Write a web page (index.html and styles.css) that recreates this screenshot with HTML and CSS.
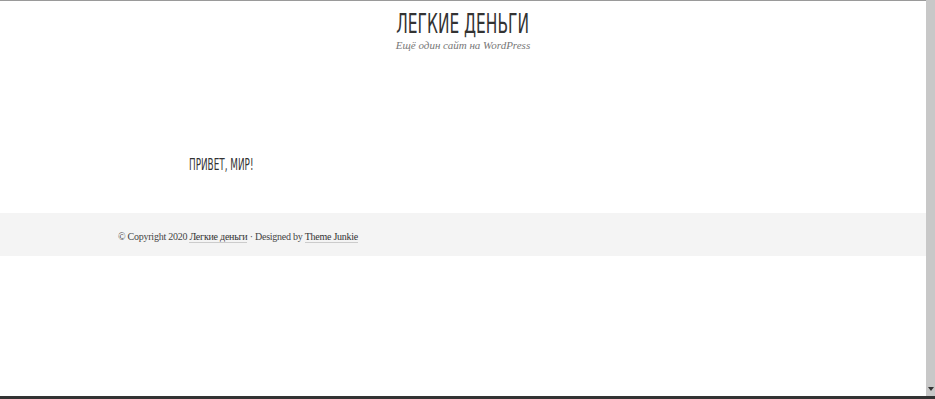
FILE: index.html
```html
<!DOCTYPE html>
<html lang="ru">
<head>
<meta charset="utf-8">
<title>Легкие деньги</title>
<link rel="stylesheet" href="styles.css">
</head>
<body>
<div class="page">
  <header class="site-header">
    <h1 class="site-title"><span class="narrow">ЛЕГКИЕ ДЕНЬГИ</span></h1>
    <p class="site-desc">Ещё один сайт на WordPress</p>
  </header>
  <main class="content">
    <h2 class="entry-title"><span class="narrow-left">ПРИВЕТ, МИР!</span></h2>
  </main>
  <footer class="site-footer">
    <div class="footer-inner">© Copyright 2020 <a href="#">Легкие деньги</a> · Designed by <a href="#">Theme Junkie</a></div>
  </footer>
</div>
<div class="scrollbar"><span class="arrow"></span></div>
<div class="bottom-bar"></div>
</body>
</html>
```
FILE: styles.css
```css
html, body { margin: 0; padding: 0; background: #fff; }
body { font-family: "Liberation Serif", serif; color: #333; }
.page { width: 926px; border-top: 1px solid #9a9a9a; }
.site-header { text-align: center; padding-top: 8px; }
.site-title {
  margin: 0; font-family: "DejaVu Sans Condensed", "DejaVu Sans", sans-serif;
  font-weight: 400; font-size: 27px; line-height: 30px; color: #333;
}
.narrow { display: inline-block; transform: scaleX(0.635); }
.site-desc { margin: -1px 0 0; font-style: italic; font-size: 11px; line-height: 14px; color: #777; }
.content { padding: 104px 0 39px 189px; }
.entry-title {
  margin: 0; font-family: "DejaVu Sans Condensed", "DejaVu Sans", sans-serif;
  font-weight: 400; font-size: 16px; line-height: 18px; color: #333;
}
.narrow-left { display: inline-block; transform: scaleX(0.615); transform-origin: left center; }
.site-footer { background: #f4f4f4; height: 43px; display: flex; align-items: center; }
.footer-inner { padding: 3px 0 0 118px; font-size: 10px; letter-spacing: -0.25px; color: #444; }
.footer-inner a { color: #333; text-decoration: none; border-bottom: 1px solid #ccc; }
.scrollbar { position: fixed; top: 0; right: 0; width: 9px; height: 396px; background: #c8c8c8; }
.arrow { position: absolute; left: 2px; bottom: 5px; width: 0; height: 0; border-left: 3px solid transparent; border-right: 3px solid transparent; border-top: 4px solid #333; }
.bottom-bar { position: fixed; left: 0; right: 0; bottom: 0; height: 3px; background: #333; }
```
